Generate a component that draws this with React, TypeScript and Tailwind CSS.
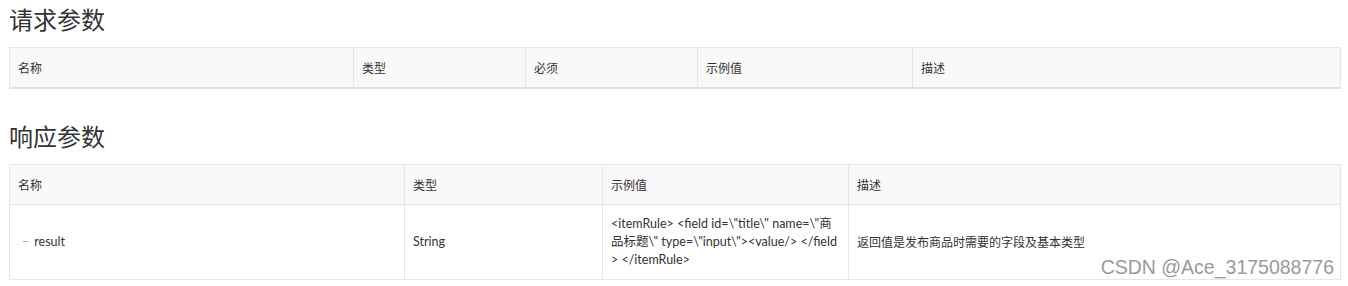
import React from "react";

const reqCols = ["名称", "类型", "必须", "示例值", "描述"];
const resCols = ["名称", "类型", "示例值", "描述"];

const exampleLines = [
  '<itemRule> <field id=\\"title\\" name=\\"商',
  '品标题\\" type=\\"input\\"><value/> </field',
  "> </itemRule>",
];

const App = () => {
  return (
    <div className="relative w-[1348px] h-[286px] bg-white pl-[9px] pr-[7px] font-['Lato','Noto_Sans_CJK_SC',sans-serif] text-[#333]">
      <h2 className="h-[47px] pt-[6px] text-[24px] leading-[26px] font-normal font-['Noto_Sans_CJK_SC',sans-serif]">
        请求参数
      </h2>
      <div className="grid grid-cols-[344px_172px_172px_215px_1fr] border border-[#e6e6e6] border-b-2 border-b-[#e0e0e0] bg-[#f9f9f9]">
        {reqCols.map((c, i) => (
          <div
            key={c}
            className={`h-[39px] flex items-center px-[8px] text-[12px] font-['Noto_Sans_CJK_SC',sans-serif] ${
              i < reqCols.length - 1 ? "border-r border-[#e6e6e6]" : ""
            }`}
          >
            {c}
          </div>
        ))}
      </div>
      <h2 className="h-[75px] pt-[34px] text-[24px] leading-[26px] font-normal font-['Noto_Sans_CJK_SC',sans-serif]">
        响应参数
      </h2>
      <div className="grid grid-cols-[395px_198px_246px_1fr] border border-[#e6e6e6] text-[12.5px]">
        {resCols.map((c, i) => (
          <div
            key={c}
            className={`h-[40px] flex items-center px-[8px] text-[12px] bg-[#f9f9f9] border-b border-[#e6e6e6] font-['Noto_Sans_CJK_SC',sans-serif] ${
              i < resCols.length - 1 ? "border-r" : ""
            }`}
          >
            {c}
          </div>
        ))}
        <div className="h-[74px] flex items-center pl-[12px] border-r border-[#e6e6e6]">
          <span className="text-[#aaa] mr-[5px]">−</span>result
        </div>
        <div className="flex items-center px-[8px] border-r border-[#e6e6e6]">String</div>
        <div className="flex flex-col justify-center px-[8px] border-r border-[#e6e6e6] leading-[18px] whitespace-pre">
          {exampleLines.map((l) => (
            <span key={l}>{l}</span>
          ))}
        </div>
        <div className="flex items-center px-[8px] text-[12px] font-['Noto_Sans_CJK_SC',sans-serif]">
          返回值是发布商品时需要的字段及基本类型
        </div>
      </div>
      <div className="absolute right-[14px] bottom-[9px] text-[19.5px] leading-[20px] text-[#9a9a9a] font-['Liberation_Sans',sans-serif]">
        CSDN @Ace_3175088776
      </div>
    </div>
  );
};

export default App;
